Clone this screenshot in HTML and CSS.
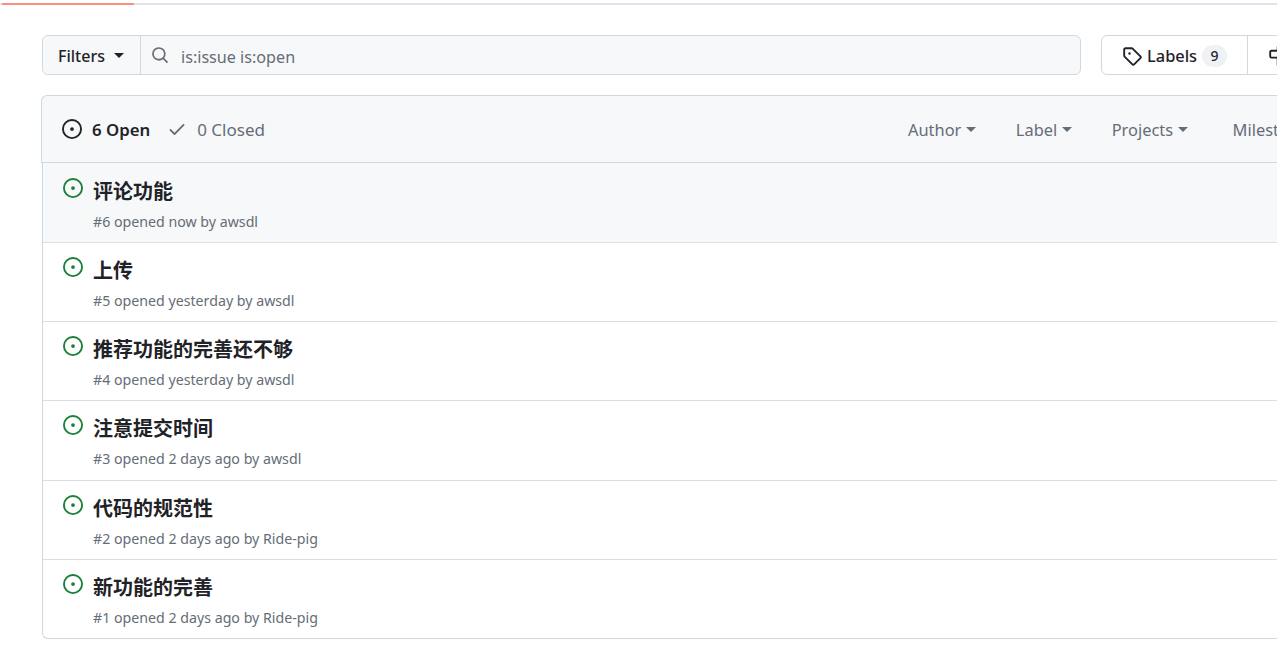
FILE: index.html
```html
<!DOCTYPE html>
<html lang="en">
<head>
<meta charset="utf-8">
<title>Issues</title>
<link rel="stylesheet" href="styles.css">
</head>
<body>
<div class="progress"><div class="progress-fill"></div></div>
<main class="page">
  <div class="toolbar">
    <div class="search">
      <button class="filters"><span>Filters</span> <span class="caret caret-dark"></span></button>
      <div class="query">
        <svg class="search-icon" viewBox="0 0 16 16"><path d="M10.68 11.74a6 6 0 0 1-7.922-8.982 6 6 0 0 1 8.982 7.922l3.04 3.04a.749.749 0 0 1-.326 1.275.749.749 0 0 1-.734-.215ZM11.5 7a4.499 4.499 0 1 0-8.997 0A4.499 4.499 0 0 0 11.5 7Z"/></svg>
        <span>is:issue is:open</span>
      </div>
    </div>
    <div class="links">
      <a class="link">
        <svg class="tag-icon" viewBox="0 0 16 16"><path d="M1 7.775V2.75C1 1.784 1.784 1 2.75 1h5.025c.464 0 .91.184 1.238.513l6.25 6.25a1.75 1.75 0 0 1 0 2.474l-5.026 5.026a1.75 1.75 0 0 1-2.474 0l-6.25-6.25A1.752 1.752 0 0 1 1 7.775Zm1.5 0c0 .066.026.13.073.177l6.25 6.25a.25.25 0 0 0 .354 0l5.025-5.025a.25.25 0 0 0 0-.354l-6.25-6.25a.25.25 0 0 0-.177-.073H2.75a.25.25 0 0 0-.25.25ZM6 5a1 1 0 1 1 0 2 1 1 0 0 1 0-2Z"/></svg>
        <span>Labels</span> <span class="count">9</span>
      </a>
      <a class="link link-next">
        <svg class="tag-icon" viewBox="0 0 16 16"><path d="M7.75 0a.75.75 0 0 1 .75.75V3h3.634c.414 0 .814.147 1.13.414l2.07 1.75a1.75 1.75 0 0 1 0 2.672l-2.07 1.75a1.75 1.75 0 0 1-1.13.414H8.5v5.25a.75.75 0 0 1-1.5 0V10H2.75A1.75 1.75 0 0 1 1 8.25v-3.5C1 3.784 1.784 3 2.75 3H7V.75A.75.75 0 0 1 7.75 0Zm4.384 8.5a.25.25 0 0 0 .161-.06l2.07-1.75a.25.25 0 0 0 0-.38l-2.07-1.75a.25.25 0 0 0-.161-.06H2.75a.25.25 0 0 0-.25.25v3.5c0 .138.112.25.25.25h9.384Z"/></svg>
        <span>Milestones</span>
      </a>
    </div>
  </div>

  <section class="box">
    <header class="box-head">
      <div class="states">
        <span class="state state-on">
          <svg class="state-icon" viewBox="0 0 16 16"><path d="M8 9.5a1.5 1.5 0 1 0 0-3 1.5 1.5 0 0 0 0 3Z"/><path d="M8 0a8 8 0 1 1 0 16A8 8 0 0 1 8 0ZM1.5 8a6.5 6.5 0 1 0 13 0 6.5 6.5 0 0 0-13 0Z"/></svg>
          <span>6 Open</span>
        </span>
        <span class="state">
          <svg class="check-icon" viewBox="0 0 16 16"><path d="M13.78 4.22a.75.75 0 0 1 0 1.06l-7.25 7.25a.75.75 0 0 1-1.06 0L2.22 9.28a.751.751 0 0 1 1.06-1.06L6 10.94l6.72-6.72a.75.75 0 0 1 1.06 0Z"/></svg>
          <span>0 Closed</span>
        </span>
      </div>
      <div class="sorts">
        <span class="sort">Author<span class="caret"></span></span>
        <span class="sort">Label<span class="caret"></span></span>
        <span class="sort">Projects<span class="caret"></span></span>
        <span class="sort sort-last">Milestones<span class="caret"></span></span>
      </div>
    </header>
    <ul class="rows">
      <li class="row row-hover">
        <svg class="issue-icon" viewBox="0 0 16 16"><path d="M8 9.5a1.5 1.5 0 1 0 0-3 1.5 1.5 0 0 0 0 3Z"/><path d="M8 0a8 8 0 1 1 0 16A8 8 0 0 1 8 0ZM1.5 8a6.5 6.5 0 1 0 13 0 6.5 6.5 0 0 0-13 0Z"/></svg>
        <div><div class="title">评论功能</div><div class="meta">#6 opened now by awsdl</div></div>
      </li>
      <li class="row">
        <svg class="issue-icon" viewBox="0 0 16 16"><path d="M8 9.5a1.5 1.5 0 1 0 0-3 1.5 1.5 0 0 0 0 3Z"/><path d="M8 0a8 8 0 1 1 0 16A8 8 0 0 1 8 0ZM1.5 8a6.5 6.5 0 1 0 13 0 6.5 6.5 0 0 0-13 0Z"/></svg>
        <div><div class="title">上传</div><div class="meta">#5 opened yesterday by awsdl</div></div>
      </li>
      <li class="row">
        <svg class="issue-icon" viewBox="0 0 16 16"><path d="M8 9.5a1.5 1.5 0 1 0 0-3 1.5 1.5 0 0 0 0 3Z"/><path d="M8 0a8 8 0 1 1 0 16A8 8 0 0 1 8 0ZM1.5 8a6.5 6.5 0 1 0 13 0 6.5 6.5 0 0 0-13 0Z"/></svg>
        <div><div class="title">推荐功能的完善还不够</div><div class="meta">#4 opened yesterday by awsdl</div></div>
      </li>
      <li class="row">
        <svg class="issue-icon" viewBox="0 0 16 16"><path d="M8 9.5a1.5 1.5 0 1 0 0-3 1.5 1.5 0 0 0 0 3Z"/><path d="M8 0a8 8 0 1 1 0 16A8 8 0 0 1 8 0ZM1.5 8a6.5 6.5 0 1 0 13 0 6.5 6.5 0 0 0-13 0Z"/></svg>
        <div><div class="title">注意提交时间</div><div class="meta">#3 opened 2 days ago by awsdl</div></div>
      </li>
      <li class="row">
        <svg class="issue-icon" viewBox="0 0 16 16"><path d="M8 9.5a1.5 1.5 0 1 0 0-3 1.5 1.5 0 0 0 0 3Z"/><path d="M8 0a8 8 0 1 1 0 16A8 8 0 0 1 8 0ZM1.5 8a6.5 6.5 0 1 0 13 0 6.5 6.5 0 0 0-13 0Z"/></svg>
        <div><div class="title">代码的规范性</div><div class="meta">#2 opened 2 days ago by Ride-pig</div></div>
      </li>
      <li class="row">
        <svg class="issue-icon" viewBox="0 0 16 16"><path d="M8 9.5a1.5 1.5 0 1 0 0-3 1.5 1.5 0 0 0 0 3Z"/><path d="M8 0a8 8 0 1 1 0 16A8 8 0 0 1 8 0ZM1.5 8a6.5 6.5 0 1 0 13 0 6.5 6.5 0 0 0-13 0Z"/></svg>
        <div><div class="title">新功能的完善</div><div class="meta">#1 opened 2 days ago by Ride-pig</div></div>
      </li>
    </ul>
  </section>
</main>
</body>
</html>
```
FILE: styles.css
```css
* { box-sizing: border-box; }
html, body { margin: 0; height: 646px; overflow: hidden; background: #fff; }
body { font-family: "Noto Sans", "Open Sans", "Noto Sans CJK SC", sans-serif; color: #1f2328; }
.progress { height: 5px; background: #fff; border-bottom: 2px solid #dfe4ec; padding-left: 2px; padding-top: 3px; }
.progress-fill { width: 132px; height: 2px; background: #fb8f7a; }
.page { width: 1500px; padding: 30px 0 0 41px; }
.toolbar { display: flex; gap: 20px; height: 40px; padding-left: 1px; }
.search { display: flex; width: 1039px; height: 40px; border: 1px solid #d1d9e0; border-radius: 6px; background: #f6f8fa; }
.filters { display: flex; align-items: center; gap: 9px; width: 98px; padding: 1px 0 0 15px; border: 0; border-right: 1px solid #d1d9e0; background: #f6f8fa; border-radius: 6px 0 0 6px; font: 500 16px "Noto Sans", sans-serif; color: #1f2328; }
.query { display: flex; align-items: center; gap: 12px; padding: 3px 0 0 10px; font-size: 16.15px; color: #656d76; }
.search-icon { width: 18px; height: 18px; margin-top: -3px; fill: #656d76; }
.links { display: flex; height: 40px; border: 1px solid #d1d9e0; border-radius: 6px; }
.link { display: flex; align-items: center; gap: 5px; padding: 1px 20px 0; font-size: 16.4px; font-weight: 500; color: #1f2328; }
.link-next { border-left: 1px solid #d1d9e0; }
.tag-icon { width: 20px; height: 20px; fill: #1f2328; }
.count { display: inline-block; min-width: 25px; height: 22px; border-radius: 11px; background: #eff2f5; font-size: 14px; line-height: 22px; text-align: center; }
.caret { display: inline-block; width: 0; height: 0; margin-left: 4.5px; border: 5px solid transparent; border-top-color: #656d76; border-bottom: 0; }
.caret-dark { margin-left: 0; border-top-color: #1f2328; }
.box { width: 1400px; margin-top: 20px; }
.box-head { display: flex; justify-content: space-between; align-items: center; height: 68px; padding-left: 20px; background: #f6f8fa; border: 1px solid #d1d9e0; border-right: 0; border-radius: 6px 0 0 0; }
.states { display: flex; gap: 17px; font-size: 17px; }
.state { display: flex; align-items: center; gap: 10px; color: #656d76; }
.state-on { font-size: 16.8px; font-weight: 600; color: #1f2328; }
.state-icon { width: 20px; height: 20px; fill: #1f2328; }
.check-icon { width: 20px; height: 20px; fill: #656d76; }
.sorts { display: flex; gap: 40px; width: 533px; font-size: 16.4px; color: #656d76; }
.sort { display: flex; align-items: center; }
.sort-last { margin-left: 5px; }
.rows { list-style: none; height: 476px; margin: 0 0 0 1px; padding: 0; border-left: 1px solid #d1d9e0; border-bottom: 1px solid #d1d9e0; border-radius: 0 0 0 6px; overflow: hidden; }
.row { display: flex; gap: 10px; height: 79.2px; padding: 14px 0 0 20px; border-bottom: 1px solid #d8dee4; }
.row:first-child { height: 80px; padding-top: 15px; }
.row:last-child { border-bottom: 0; }
.row-hover { background: #f6f8fa; }
.issue-icon { width: 20px; height: 20px; flex: none; fill: #1a7f37; }
.title { font-family: "Noto Sans CJK SC", sans-serif; font-size: 20px; font-weight: 700; line-height: 26px; color: #1f2328; }
.meta { margin-top: 8px; font-size: 14.2px; line-height: 20px; color: #656d76; }
```
